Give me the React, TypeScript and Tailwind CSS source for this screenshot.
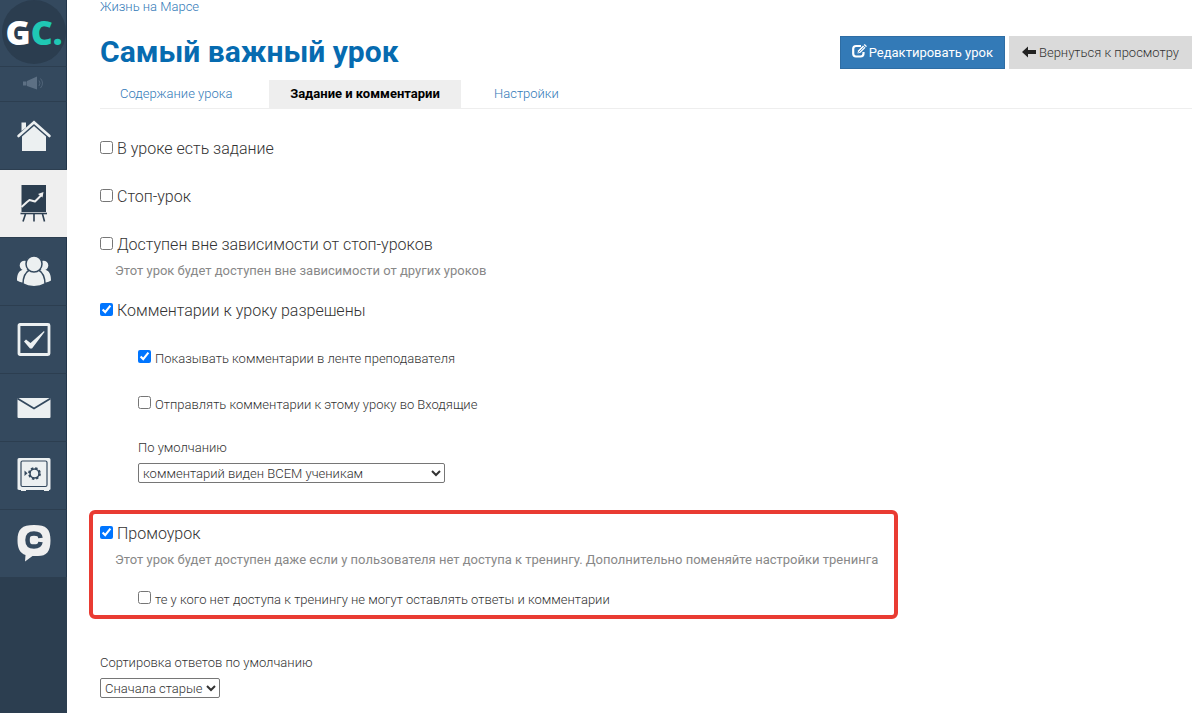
import React, { useId, useState } from "react";
import { clsx } from "clsx";

const ink = "#ecf0f1";
const navy = "#34495e";

function HomeIcon() {
  return (
    <svg width="36" height="36" viewBox="0 0 36 36" aria-hidden="true">
      <path d="M5.500 13V4.500h4.500v5z" fill={ink} />
      <path d="M2.500 18 18 4.200 33.500 18" fill="none" stroke={ink} strokeWidth="2.600" strokeLinecap="round" />
      <path d="M6 18.500 18 8l12 10.500V33H6z" fill={ink} />
    </svg>
  );
}

function BoardIcon() {
  return (
    <svg width="36" height="42" viewBox="0 0 36 42" aria-hidden="true">
      <path d="M5.500 2H30v27H5.500z" fill="#2c3e50" />
      <path d="M4.500 30.500h26.500" stroke="#2c3e50" strokeWidth="1.600" />
      <path d="m5.500 24 5.500-5 2.500-2 5.500 1.500 7-7" fill="none" stroke="#efefef" strokeWidth="2" strokeLinejoin="round" />
      <path d="m22 11 5.500-2-1 5.500z" fill="#efefef" />
      <path d="m9.500 31-2.500 7.500M18 31v7.500M26.500 31l2 7.500" stroke="#2c3e50" strokeWidth="1.600" />
    </svg>
  );
}

function UsersIcon() {
  return (
    <svg width="36" height="36" viewBox="0 0 36 36" aria-hidden="true">
      <g fill={ink}>
        <circle cx="8.500" cy="11.500" r="4.800" />
        <circle cx="27.500" cy="11.500" r="4.800" />
        <path d="M1 26.500c0-5 1-9 5-10.500h6v13c-4 0-8-.5-11-2.500zM35 26.500c0-5-1-9-5-10.500h-6v13c4 0 8-.5 11-2.500z" />
      </g>
      <g fill={ink} stroke={navy} strokeWidth="1.500">
        <path d="M7 30c0-6 2-11.500 7-14.500h8c5 3 7 8.500 7 14.500-6 3.500-16 3.500-22 0z" />
        <circle cx="18" cy="10" r="8" />
      </g>
    </svg>
  );
}

function CheckIcon() {
  return (
    <svg width="36" height="36" viewBox="0 0 36 36" aria-hidden="true">
      <rect x="3" y="2.500" width="30" height="30" rx="1" fill="none" stroke={ink} strokeWidth="2.800" />
      <path d="m8 19.500 2-2 4.500 3.500L28 9l.5 1L16 26.500h-2z" fill={ink} />
    </svg>
  );
}

function MailIcon() {
  return (
    <svg width="36" height="24" viewBox="0 0 36 24" aria-hidden="true">
      <rect x="1.500" y="2" width="33" height="20" rx="1" fill={ink} />
      <path d="m1.500 2.500 16.500 10 16.500-10" fill="none" stroke={navy} strokeWidth="1.800" />
    </svg>
  );
}

function SafeIcon() {
  return (
    <svg width="36" height="36" viewBox="0 1 36 36" aria-hidden="true">
      <path d="M3 1h30q1.500 0 1.500 1.500V32q0 1-1.500 1v1h-5v-1H10v1H5v-1q-3.500 0-3.500-1V2.500Q1.500 1 3 1z" fill={ink} />
      <rect x="5" y="4" width="26" height="25.500" rx="1.500" fill="none" stroke={navy} strokeWidth="1.200" />
      <circle cx="18.500" cy="16.500" r="4.500" fill="none" stroke={navy} strokeWidth="1.500" />
      <circle cx="18.500" cy="16.500" r="5.200" fill="none" stroke={navy} strokeWidth="2.400" strokeDasharray="2.300 1.784" />
      <path d="m8.500 13.500 3 2.800-3 2.800z" fill={navy} />
    </svg>
  );
}

function ChatiumIcon() {
  return (
    <svg width="36" height="38" viewBox="0 1 36 38" aria-hidden="true">
      <path
        d="M18 1c12.500 0 16.500 4 16.500 15.500 0 11-4 15.500-12.500 15.500h-5.500l-7.500 5.500.5-6.500C4 29 1.500 24.500 1.500 16.500 1.500 5 6 1 18 1z"
        fill="#efefef"
      />
      <path d="M24.500 14c-.5-3.500-2.500-4.500-6.500-4.500-5 0-6.500 2-6.500 6.500s1.500 6.500 6.500 6.500c4 0 6-1 6.500-4.500" fill="none" stroke={navy} strokeWidth="4.500" />
    </svg>
  );
}

function HornIcon() {
  return (
    <svg width="22" height="16" viewBox="0 0 22 16" aria-hidden="true">
      <path d="M1 5.500h3.500v4H1zM5 5l10-4.500v13L5 10z" fill="#5d7084" />
      <path d="M17 4.500q2 2.500 0 5.500M18.500 2.500q4 4.500 0 9.500" fill="none" stroke="#5d7084" strokeWidth=".7" />
    </svg>
  );
}

function EditIcon() {
  return (
    <svg width="15" height="14" viewBox="0 0 15 14" aria-hidden="true">
      <path
        d="M9 2H4Q1.200 2 1.200 4.800V9.500Q1.200 12.500 4 12.500H8.500Q11.500 12.500 11.500 9.500V8"
        fill="none"
        stroke="#fff"
        strokeWidth="2.200"
      />
      <path d="m5.500 9.500.5-3L11 1.500l2.500 2.300-5 5z" fill="#fff" />
      <path d="m11.700.9 1-.9L15 2.200l-1 .9z" fill="#fff" />
      <path d="m6.500 8.500 6-5.800" stroke="#337ab7" strokeWidth=".8" />
    </svg>
  );
}

function BackIcon() {
  return (
    <svg width="14" height="12" viewBox="0 0 14 12" aria-hidden="true">
      <path d="M0 6 6 .5V4h8v4H6v3.500z" fill="#222" />
    </svg>
  );
}

const menu = [
  { name: "Главная", icon: <HomeIcon /> },
  { name: "Обучение", icon: <BoardIcon />, active: true },
  { name: "Пользователи", icon: <UsersIcon /> },
  { name: "Задачи", icon: <CheckIcon /> },
  { name: "Сообщения", icon: <MailIcon /> },
  { name: "Продажи", icon: <SafeIcon /> },
  { name: "Чат", icon: <ChatiumIcon /> },
];

function Sidebar() {
  return (
    <nav className="w-[67px] shrink-0 bg-[#2c3e50]">
      <a href="#" aria-label="GetCourse" className="flex h-[66px] items-start justify-center border-r border-[#22364b] bg-[#34495e] pl-0.5">
        <span className="flex h-16 w-16 items-center justify-center rounded-full bg-[#2b3d4f] font-['Open_Sans',sans-serif] text-[34px] font-extrabold text-white">
          G<span className="text-[#1fc8b4]">C.</span>
        </span>
      </a>
      <a
        href="#"
        aria-label="Уведомления"
        className="flex h-[35px] items-center justify-center border-t border-r border-t-[#2c3e50] border-r-[#22364b] bg-[#34495e]"
      >
        <HornIcon />
      </a>
      {menu.map((m) => (
        <a
          key={m.name}
          href="#"
          aria-label={m.name}
          className={clsx(
            "flex h-[68px] items-center justify-center border-t",
            m.active ? "border-[#2c3e50] bg-[#efefef]" : "border-r border-t-[#2c3e50] border-r-[#22364b] bg-[#34495e] pl-px",
          )}
        >
          {m.icon}
        </a>
      ))}
    </nav>
  );
}

function Check({ label, checked = false, large = false }: { label: string; checked?: boolean; large?: boolean }) {
  const id = useId();
  const [on, setOn] = useState(checked);
  return (
    <div className="flex items-start">
      <input
        id={id}
        type="checkbox"
        checked={on}
        onChange={() => setOn(!on)}
        className={clsx("h-[13px] w-[13px] shrink-0 accent-[#0075ff]", large ? "mt-1" : "mt-px")}
      />
      <label htmlFor={id} className={large ? "pl-1 text-base leading-6" : "pl-1 leading-5"}>
        {label}
      </label>
    </div>
  );
}

function Hint({ children }: { children: React.ReactNode }) {
  return <p className="pt-1 pl-[15px] leading-5 font-normal text-[#888]">{children}</p>;
}

function Select({ id, options, className }: { id: string; options: string[]; className?: string }) {
  return (
    <select
      id={id}
      className={clsx("block h-5 rounded-[2px] border border-[#767676] bg-white text-[13px] leading-4 text-[#333]", className)}
    >
      {options.map((o) => (
        <option key={o}>{o}</option>
      ))}
    </select>
  );
}

export default function App() {
  return (
    <div className="flex min-h-screen bg-white font-[Roboto,sans-serif] text-[13px] font-light text-[#333]">
      <Sidebar />
      <main className="min-w-0 flex-1 pr-2 pl-[33px]">
        <a href="#" className="block h-6 leading-[14px] text-[#337ab7]">
          Жизнь на Марсе
        </a>
        <header className="flex items-start justify-between pt-3">
          <h1 className="text-[30px] leading-8 font-bold text-[#066bb0]">Самый важный урок</h1>
          <div className="flex gap-1">
            <button type="button" className="flex h-[33px] items-center gap-0.5 border border-[#2e6da4] bg-[#337ab7] px-[11px] font-normal text-white">
              <span className="pb-1">
                <EditIcon />
              </span>
              Редактировать урок
            </button>
            <button type="button" className="flex h-[33px] items-center gap-[3px] bg-[#dadada] px-[13px] text-[#333]">
              <span className="pb-0.5">
                <BackIcon />
              </span>
              Вернуться к просмотру
            </button>
          </div>
        </header>
        <div className="mt-[11px] flex border-b border-[#eee]">
          <a href="#" className="w-[169px] pl-5 leading-7 text-[#337ab7]">
            Содержание урока
          </a>
          <a href="#" className="w-48 bg-[#eee] text-center leading-7 font-bold text-black">
            Задание и комментарии
          </a>
          <a href="#" className="pl-[33px] leading-7 text-[#337ab7]">
            Настройки
          </a>
        </div>
        <form className="pt-7">
          <div className="flex flex-col gap-6">
            <Check large label="В уроке есть задание" />
            <Check large label="Стоп-урок" />
            <div>
              <Check large label="Доступен вне зависимости от стоп-уроков" />
              <Hint>Этот урок будет доступен вне зависимости от других уроков</Hint>
            </div>
          </div>
          <div className="pt-[18px]">
            <Check large checked label="Комментарии к уроку разрешены" />
            <div className="flex flex-col gap-[26px] pt-[26px] pl-[38px]">
              <Check checked label="Показывать комментарии в ленте преподавателя" />
              <Check label="Отправлять комментарии к этому уроку во Входящие" />
              <div className="-mt-[3px]">
                <label htmlFor="default-visibility" className="mb-[5px] block leading-5">
                  По умолчанию
                </label>
                <Select
                  id="default-visibility"
                  className="w-[307px]"
                  options={["комментарий виден ВСЕМ ученикам", "комментарий виден только преподавателю"]}
                />
              </div>
            </div>
          </div>
          <section className="mt-[27px] -ml-[11px] w-[809px] max-w-full rounded-md border-4 border-[#e93b32] pt-2 pb-[5px] pl-[7px]">
            <Check large checked label="Промоурок" />
            <Hint>
              Этот урок будет доступен даже если у пользователя нет доступа к тренингу. Дополнительно поменяйте настройки тренинга
            </Hint>
            <div className="pt-5 pl-[38px]">
              <Check label="те у кого нет доступа к тренингу не могут оставлять ответы и комментарии" />
            </div>
          </section>
          <div className="pt-[34px]">
            <label htmlFor="sort-order" className="mb-[5px] block leading-5">
              Сортировка ответов по умолчанию
            </label>
            <Select id="sort-order" options={["Сначала старые", "Сначала новые"]} />
          </div>
        </form>
      </main>
    </div>
  );
}
